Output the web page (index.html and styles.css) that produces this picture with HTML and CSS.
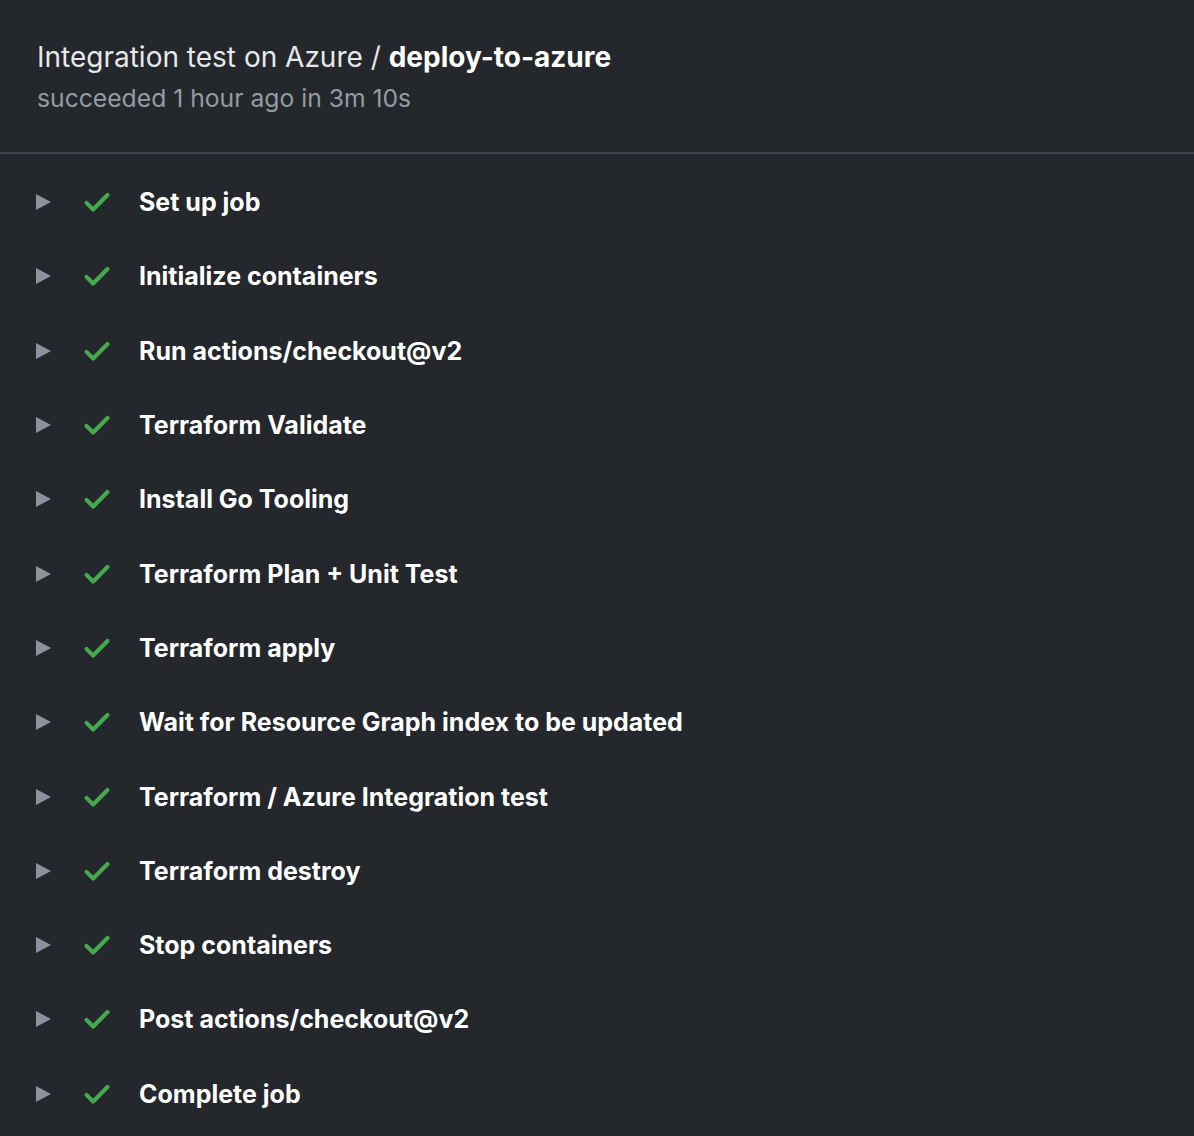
FILE: index.html
```html
<!DOCTYPE html>
<html>
<head>
<meta charset="utf-8">
<link rel="stylesheet" href="styles.css">
</head>
<body>
<div class="page">
  <header class="header">
    <h1 class="title"><span class="wf">Integration test on Azure / </span><span class="job">deploy-to-azure</span></h1>
    <div class="meta">succeeded 1 hour ago in 3m 10s</div>
  </header>
  <ul class="steps">
    <li class="step"><span class="caret"></span><svg class="check" viewBox="0 0 16 16"><path d="M2 8.5l3.8 3.8L14 4"/></svg><span class="name">Set up job</span></li>
    <li class="step"><span class="caret"></span><svg class="check" viewBox="0 0 16 16"><path d="M2 8.5l3.8 3.8L14 4"/></svg><span class="name">Initialize containers</span></li>
    <li class="step"><span class="caret"></span><svg class="check" viewBox="0 0 16 16"><path d="M2 8.5l3.8 3.8L14 4"/></svg><span class="name">Run actions/checkout@v2</span></li>
    <li class="step"><span class="caret"></span><svg class="check" viewBox="0 0 16 16"><path d="M2 8.5l3.8 3.8L14 4"/></svg><span class="name">Terraform Validate</span></li>
    <li class="step"><span class="caret"></span><svg class="check" viewBox="0 0 16 16"><path d="M2 8.5l3.8 3.8L14 4"/></svg><span class="name">Install Go Tooling</span></li>
    <li class="step"><span class="caret"></span><svg class="check" viewBox="0 0 16 16"><path d="M2 8.5l3.8 3.8L14 4"/></svg><span class="name">Terraform Plan + Unit Test</span></li>
    <li class="step"><span class="caret"></span><svg class="check" viewBox="0 0 16 16"><path d="M2 8.5l3.8 3.8L14 4"/></svg><span class="name">Terraform apply</span></li>
    <li class="step"><span class="caret"></span><svg class="check" viewBox="0 0 16 16"><path d="M2 8.5l3.8 3.8L14 4"/></svg><span class="name">Wait for Resource Graph index to be updated</span></li>
    <li class="step"><span class="caret"></span><svg class="check" viewBox="0 0 16 16"><path d="M2 8.5l3.8 3.8L14 4"/></svg><span class="name">Terraform / Azure Integration test</span></li>
    <li class="step"><span class="caret"></span><svg class="check" viewBox="0 0 16 16"><path d="M2 8.5l3.8 3.8L14 4"/></svg><span class="name">Terraform destroy</span></li>
    <li class="step"><span class="caret"></span><svg class="check" viewBox="0 0 16 16"><path d="M2 8.5l3.8 3.8L14 4"/></svg><span class="name">Stop containers</span></li>
    <li class="step"><span class="caret"></span><svg class="check" viewBox="0 0 16 16"><path d="M2 8.5l3.8 3.8L14 4"/></svg><span class="name">Post actions/checkout@v2</span></li>
    <li class="step"><span class="caret"></span><svg class="check" viewBox="0 0 16 16"><path d="M2 8.5l3.8 3.8L14 4"/></svg><span class="name">Complete job</span></li>
  </ul>
</div>
</body>
</html>
```

FILE: styles.css
```css
html, body {
  margin: 0;
  padding: 0;
  background: #24272c;
}
body {
  font-family: Inter, "Noto Sans", sans-serif;
  color: #ffffff;
}
.page {
  width: 1194px;
  height: 1136px;
  overflow: hidden;
}
.header {
  padding: 37px 37px 0;
  height: 115px;
  border-bottom: 2px solid #40454c;
}
.title {
  margin: 0;
  font-size: 28px;
  line-height: 40px;
  font-weight: 400;
  letter-spacing: 0;
}
.wf {
  color: #e6e8ea;
}
.job {
  font-weight: 700;
  color: #ffffff;
}
.meta {
  margin-top: 4px;
  font-size: 24.7px;
  line-height: 34px;
  color: #969ba1;
}
.steps {
  list-style: none;
  margin: 0;
  padding: 11px 0 0;
}
.step {
  display: flex;
  align-items: center;
  height: 74.3px;
  padding-left: 36px;
}
.caret {
  width: 0;
  height: 0;
  border-top: 8px solid transparent;
  border-bottom: 8px solid transparent;
  border-left: 15px solid #8d939c;
}
.check {
  width: 28px;
  height: 28px;
  margin-left: 32px;
  fill: none;
  stroke: #45a94e;
  stroke-width: 2.4;
  stroke-linecap: round;
  stroke-linejoin: round;
}
.name {
  margin-left: 28px;
  font-size: 25px;
  font-weight: 700;
  color: #ffffff;
}
```
